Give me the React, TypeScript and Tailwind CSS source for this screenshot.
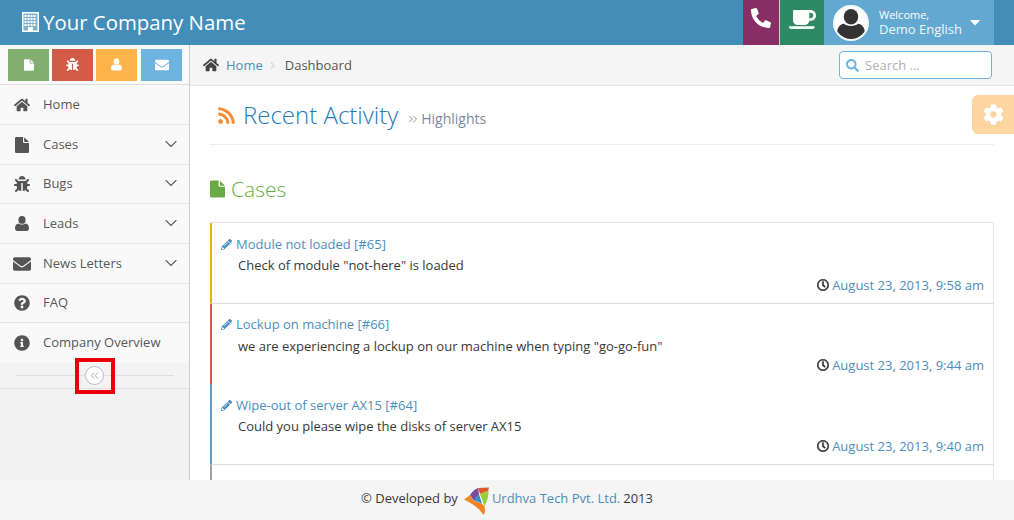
import {
  FaBug,
  FaCaretDown,
  FaCog,
  FaCoffee,
  FaEnvelope,
  FaHome,
  FaInfoCircle,
  FaPencilAlt,
  FaPhoneAlt,
  FaQuestionCircle,
  FaRegClock,
  FaRss,
  FaSearch,
} from 'react-icons/fa';
import { ChevronDown, ChevronRight, ChevronsLeft, ChevronsRight } from 'lucide-react';

// font awesome 4 shapes that the newer icon sets changed
function FileIcon({ className }: { className?: string }) {
  return (
    <svg viewBox="0 0 14 16" fill="currentColor" className={className}>
      <path d="M0 1.2Q0 0 1.2 0H8V4.8Q8 6 9.2 6H14V14.8Q14 16 12.8 16H1.2Q0 16 0 14.8Z" />
      <path d="M9.2 0.2L13.8 4.8Q13.8 5 13.4 5H9.6Q9.2 5 9.2 4.6Z" />
    </svg>
  );
}

function UserIcon({ className }: { className?: string }) {
  return (
    <svg viewBox="0 0 14 15" fill="currentColor" className={className}>
      <ellipse cx="7" cy="3.9" rx="3.6" ry="3.9" />
      <path d="M0 12.2C0 9.8 1.2 7.6 3.5 7.4C5 8.8 9 8.8 10.5 7.4C12.8 7.6 14 9.8 14 12.2C14 14 13 15 11.8 15H2.2C1 15 0 14 0 12.2Z" />
    </svg>
  );
}

function BuildingIcon() {
  const windows = [2.5, 5.5, 8.5, 11.5];
  return (
    <svg width="17" height="20" viewBox="0 0 17 20" className="shrink-0">
      <rect x="0.75" y="0.75" width="15.5" height="18.5" fill="#7fb2d2" stroke="#ffffff" strokeWidth="1.5" />
      {windows.map((x) =>
        [3, 6, 9, 12].map((y) => <rect key={`${x}-${y}`} x={x} y={y} width="2" height="2" fill="#ffffff" />),
      )}
      <rect x="6" y="15" width="5" height="4" fill="#ffffff" />
    </svg>
  );
}

function Logo() {
  return (
    <svg width="26" height="28" viewBox="0 0 26 28" className="shrink-0">
      <path d="M0 12.5L6 8L10 15Q4 13.5 0 12.5Z" fill="#f08a1d" />
      <path d="M6 8Q9 3 14 1L15 7L10 14Z" fill="#7b4a9c" />
      <path d="M10 14L15 7L18 17Q14 14 10 14Z" fill="#2f8fc9" />
      <path d="M14 1L25 0.5L24 4L16 7Z" fill="#e4572e" />
      <path d="M16 7L24.5 3.5Q25 11 20.5 19Z" fill="#9ccb3b" />
      <path d="M1 13Q11 13 18 17L20.5 19L21 25L19.5 28Q15 20 1 13Z" fill="#f3821f" />
    </svg>
  );
}

const menu = [
  { label: 'Home', icon: <FaHome className="text-[16px]" />, h: 'h-[40px]', line: 'border-b' },
  { label: 'Cases', icon: <FileIcon className="h-[16px] w-[14px]" />, arrow: true, h: 'h-[40px]', line: 'border-b' },
  { label: 'Bugs', icon: <FaBug className="text-[16px]" />, arrow: true, h: 'h-[39px]', line: 'border-b' },
  { label: 'Leads', icon: <UserIcon className="h-[15px] w-[14px]" />, arrow: true, h: 'h-[40px]', line: 'border-b' },
  { label: 'News Letters', icon: <FaEnvelope className="text-[18px]" />, arrow: true, h: 'h-[40px]', line: 'border-b' },
  { label: 'FAQ', icon: <FaQuestionCircle className="text-[16px]" />, h: 'h-[39px]', line: 'border-b' },
  { label: 'Company Overview', icon: <FaInfoCircle className="text-[16px]" />, h: 'h-[40px]', line: '' },
];

const activity = [
  { title: 'Module not loaded [#65]', text: 'Check of module "not-here" is loaded', time: 'August 23, 2013, 9:58 am', border: 'border-l-[#e8b110]', h: 'h-[81px]', line: 'border-b', top: 'pt-[12px]', body: 'mt-[3px]', foot: 'mt-[2px]' },
  { title: 'Lockup on machine [#66]', text: 'we are experiencing a lockup on our machine when typing "go-go-fun"', time: 'August 23, 2013, 9:44 am', border: 'border-l-[#d15b47]', h: 'h-[80px]', line: '', top: 'pt-[11px]', body: 'mt-[4px]', foot: 'mt-[1px]' },
  { title: 'Wipe-out of server AX15 [#64]', text: 'Could you please wipe the disks of server AX15', time: 'August 23, 2013, 9:40 am', border: 'border-l-[#5b9fc8]', h: 'h-[81px]', line: 'border-b', top: 'pt-[12px]', body: 'mt-[3px]', foot: 'mt-[2px]' },
];

export default function App() {
  return (
    <div className="relative flex h-[520px] w-[1014px] flex-col overflow-hidden bg-white font-['Open_Sans',sans-serif] text-[13px] text-[#393939]">
      <header className="flex h-[45px] shrink-0 items-center justify-between bg-[#438eb9] text-white">
        <div className="flex items-center gap-[4px] pl-[22px] text-[20.4px]">
          <BuildingIcon />
          <span>Your Company Name</span>
        </div>
        <div className="flex h-full pr-[20px]">
          <div className="flex w-[37px] justify-center border-r border-[#d5c9d5] bg-[#892e65] pt-[8px]">
            <FaPhoneAlt className="text-[20px]" />
          </div>
          <div className="flex w-[44px] justify-center bg-[#2e8965] pt-[6px]">
            <FaCoffee className="text-[27px]" />
          </div>
          <div className="flex w-[170px] items-center bg-[#62a8d1] pl-[9px]">
            <div className="flex h-[36px] w-[36px] items-end justify-center overflow-hidden rounded-full border-2 border-[#f4f8fb] bg-white">
              <UserIcon className="h-[30px] w-[28px] text-[#333333]" />
            </div>
            <div className="mb-[2px] ml-[10px] leading-[15px]">
              <div className="text-[11px]">Welcome,</div>
              <div className="text-[13px] text-[#f0f6fa]">Demo English</div>
            </div>
            <FaCaretDown className="mb-[2px] ml-[5px] text-[16px]" />
          </div>
        </div>
      </header>

      <div className="flex min-h-0 flex-1">
        <aside className="flex w-[190px] shrink-0 flex-col border-r border-[#cccccc] bg-[#f2f2f2]">
          <div className="flex h-[40px] shrink-0 items-center gap-[3px] border-b border-[#dddddd] bg-[#fafafa] pl-[8px]">
            <div className="flex h-[32px] w-[41px] items-center justify-center bg-[#82af6f] text-white"><FileIcon className="h-[12px] w-[10px]" /></div>
            <div className="flex h-[32px] w-[41px] items-center justify-center bg-[#d15b47] text-[13px] text-white"><FaBug /></div>
            <div className="flex h-[32px] w-[41px] items-center justify-center bg-[#ffb44b] text-white"><UserIcon className="h-[13px] w-[11px]" /></div>
            <div className="ml-[1px] flex h-[32px] w-[41px] items-center justify-center bg-[#6fb3e0] text-[14px] text-white"><FaEnvelope /></div>
          </div>
          {menu.map((item) => (
            <div key={item.label} className={`flex shrink-0 items-center border-b-[#e5e5e5] bg-[#f9f9f9] pr-[8px] text-[#585858] ${item.h} ${item.line}`}>
              <span className="flex w-[43px] justify-center pl-[1px] text-[#555555]">{item.icon}</span>
              <span className="flex-1">{item.label}</span>
              {item.arrow && <ChevronDown size={20} strokeWidth={1.4} className="mb-[2px] text-[#666666]" />}
            </div>
          ))}
          <div className="relative flex h-[26px] shrink-0 items-center justify-center border-b border-[#e0e0e0] bg-[#f3f3f3]">
            <div className="mx-[15px] h-px w-full bg-[#e0e0e0]" />
            <div className="absolute left-[85px] top-[3px] flex h-[19px] w-[19px] items-center justify-center rounded-full border border-[#bbbbbb] bg-white text-[#999999]">
              <ChevronsLeft size={13} strokeWidth={1.6} />
            </div>
          </div>
        </aside>

        <main className="relative min-w-0 flex-1">
          <div className="flex h-[41px] items-center justify-between border-b border-[#e5e5e5] bg-[#f5f5f5] pl-[13px] pr-[22px]">
            <div className="flex items-center">
              <FaHome className="text-[16px] text-[#444444]" />
              <span className="ml-[7px] pt-[1px] text-[#4c8fbd]">Home</span>
              <ChevronRight size={13} strokeWidth={1.5} className="mx-[3px] mt-[1px] text-[#b2b6bf]" />
              <span className="ml-[3px] pt-[1px] text-[#555555]">Dashboard</span>
            </div>
            <div className="flex h-[28px] w-[153px] items-center rounded-[4px] border border-[#6fb3e0] bg-white pl-[6px] text-[#b2b2b2]">
              <FaSearch className="text-[13px] text-[#6fb3e0]" />
              <span className="ml-[6px] pt-[1px]">Search ...</span>
            </div>
          </div>

          <div className="px-[20px]">
            <div className="flex h-[59px] items-center border-b border-[#eeeeee] pl-[7px]">
              <FaRss className="text-[19px] text-[#f58c35]" />
              <span className="ml-[7px] text-[24px] font-light text-[#2679b5]">Recent Activity</span>
              <ChevronsRight size={14} strokeWidth={1.5} className="ml-[8px] mt-[7px] text-[#8089a0]" />
              <span className="ml-[1px] mt-[6px] text-[14px] text-[#8089a0]">Highlights</span>
            </div>

            <div className="mt-[27px] flex items-center text-[#69aa46]">
              <FileIcon className="h-[18px] w-[15px]" />
              <span className="ml-[6px] text-[21px] font-light leading-[34px]">Cases</span>
            </div>

            <div className="mt-[16px] rounded-t-[2px] border-r border-t border-r-[#e5e5e5] border-t-[#e5e5e5]">
              {activity.map((a) => (
                <div key={a.title} className={`flex flex-col border-l-2 border-b-[#dddddd] pl-[9px] pr-[9px] ${a.top} ${a.h} ${a.border} ${a.line}`}>
                  <div className="flex items-center leading-[18px] text-[#4c8fbd]">
                    <FaPencilAlt className="mr-[4px] text-[11px]" />
                    {a.title}
                  </div>
                  <div className={`pl-[17px] leading-[18px] text-[#393939] ${a.body}`}>{a.text}</div>
                  <div className={`flex items-center justify-end leading-[18px] text-[#4c8fbd] ${a.foot}`}>
                    <FaRegClock className="mr-[3px] text-[12px] text-[#333333]" stroke="currentColor" strokeWidth={24} />
                    {a.time}
                  </div>
                </div>
              ))}
              <div className="h-[20px] border-l-2 border-l-[#a0a0a0]" />
            </div>
          </div>

          <div className="absolute right-0 top-[50px] flex h-[39px] w-[42px] items-center justify-center rounded-l-[6px] bg-[#fdd5a0] text-[21px] text-white">
            <FaCog />
          </div>
        </main>
      </div>

      <footer className="absolute bottom-0 left-0 flex h-[40px] w-full items-center justify-center bg-[#f5f5f5] pb-[2px] text-[#393939]">
        <span>© Developed by</span>
        <span className="ml-[6px] mr-[2px] mt-[4px]"><Logo /></span>
        <span className="text-[#4c8fbd]">Urdhva Tech Pvt. Ltd.</span>
        <span className="ml-[3px]">2013</span>
      </footer>

      <div className="absolute left-[75px] top-[358px] h-[36px] w-[40px] border-[4px] border-[#e8000b]" />
    </div>
  );
}
